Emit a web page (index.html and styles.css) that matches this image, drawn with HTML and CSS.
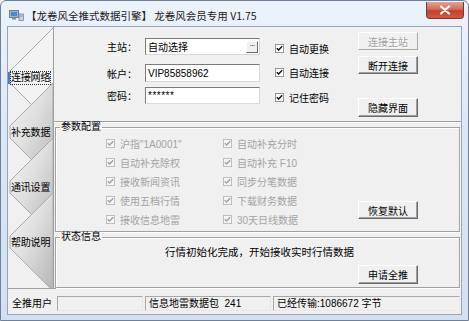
FILE: index.html
```html
<!DOCTYPE html>
<html lang="zh-CN">
<head>
<meta charset="utf-8">
<title>龙卷风全推式数据引擎</title>
<link rel="stylesheet" href="styles.css">
</head>
<body>
<div class="window">
  <div class="titlebar">
    <svg class="app-icon" width="15" height="11" viewBox="0 0 15 11">
      <rect x="0.5" y="0.5" width="9" height="7" fill="#9fb3c8" stroke="#6b7f95"/>
      <rect x="2" y="2" width="6" height="4" fill="#3c8de0"/>
      <rect x="3" y="8" width="4" height="1.5" fill="#7d8b99"/>
      <rect x="10" y="4" width="4.5" height="6.5" fill="#c9d3dc" stroke="#7c8894" stroke-width="0.8"/>
      <rect x="11" y="5.5" width="2.5" height="1" fill="#5d93cf"/>
    </svg>
    <span class="title">【龙卷风全推式数据引擎】 龙卷风会员专用 V1.75</span>
    <div class="close">
      <svg width="12" height="10" viewBox="0 0 12 10"><path d="M2 1.5L10 8.5M10 1.5L2 8.5" stroke="#fff" stroke-width="2.2" stroke-linecap="round"/></svg>
    </div>
  </div>
  <div class="client">
    <div class="body">
      <nav class="tabs">
        <svg class="tabs-bg" width="45" height="261" viewBox="0 0 45 261">
          <defs>
            <linearGradient id="tg" x1="0" y1="0" x2="1" y2="1">
              <stop offset="0" stop-color="#f6f6f6"/>
              <stop offset="0.45" stop-color="#e0e0e0"/>
              <stop offset="1" stop-color="#b5b5b5"/>
            </linearGradient>
          </defs>
          <path d="M45 1L2 44V56L45 99" fill="#f3f3f3" stroke="#a9a9a9"/>
          <polygon points="2,99 2,111 45,154 45,56" fill="url(#tg)" stroke="#a9a9a9"/>
          <polygon points="2,154 2,166 45,209 45,111" fill="url(#tg)" stroke="#a9a9a9"/>
          <polygon points="2,209 2,221 45,264 45,166" fill="url(#tg)" stroke="#a9a9a9"/>
        </svg>
        <div class="tab active"><span class="tab-label focus">连接网络</span></div>
        <div class="tab"><span class="tab-label">补充数据</span></div>
        <div class="tab"><span class="tab-label">通讯设置</span></div>
        <div class="tab"><span class="tab-label">帮助说明</span></div>
      </nav>
      <main class="main">
        <section class="top">
          <div class="form">
            <div class="frow r1"><span class="flabel">主站：</span><div class="field combo"><span>自动选择</span><span class="dots">···</span></div></div>
            <div class="frow r2"><span class="flabel">帐户：</span><div class="field tall">VIP85858962</div></div>
            <div class="frow"><span class="flabel">密码：</span><div class="field pwd">******</div></div>
          </div>
          <div class="checks">
            <div class="chk c1"><svg class="cb" viewBox="0 0 10 10"><rect x="0.5" y="0.5" width="9" height="9"/><path d="M2 4.6l2 2 4-4.2"/></svg><span>自动更换</span></div>
            <div class="chk c2"><svg class="cb" viewBox="0 0 10 10"><rect x="0.5" y="0.5" width="9" height="9"/><path d="M2 4.6l2 2 4-4.2"/></svg><span>自动连接</span></div>
            <div class="chk c3"><svg class="cb" viewBox="0 0 10 10"><rect x="0.5" y="0.5" width="9" height="9"/><path d="M2 4.6l2 2 4-4.2"/></svg><span>记住密码</span></div>
          </div>
          <div class="btns">
            <button class="btn b1" disabled>连接主站</button>
            <button class="btn b2">断开连接</button>
            <button class="btn b3">隐藏界面</button>
          </div>
        </section>
        <fieldset class="group params">
          <legend>参数配置</legend>
          <div class="pgrid">
            <div class="chk off"><svg class="cb" viewBox="0 0 10 10"><rect x="0.5" y="0.5" width="9" height="9"/><path d="M2 4.6l2 2 4-4.2"/></svg><span>沪指"1A0001"</span></div>
            <div class="chk off"><svg class="cb" viewBox="0 0 10 10"><rect x="0.5" y="0.5" width="9" height="9"/><path d="M2 4.6l2 2 4-4.2"/></svg><span>自动补充分时</span></div>
            <div class="chk off"><svg class="cb" viewBox="0 0 10 10"><rect x="0.5" y="0.5" width="9" height="9"/><path d="M2 4.6l2 2 4-4.2"/></svg><span>自动补充除权</span></div>
            <div class="chk off"><svg class="cb" viewBox="0 0 10 10"><rect x="0.5" y="0.5" width="9" height="9"/><path d="M2 4.6l2 2 4-4.2"/></svg><span>自动补充 F10</span></div>
            <div class="chk off"><svg class="cb" viewBox="0 0 10 10"><rect x="0.5" y="0.5" width="9" height="9"/><path d="M2 4.6l2 2 4-4.2"/></svg><span>接收新闻资讯</span></div>
            <div class="chk off"><svg class="cb" viewBox="0 0 10 10"><rect x="0.5" y="0.5" width="9" height="9"/><path d="M2 4.6l2 2 4-4.2"/></svg><span>同步分笔数据</span></div>
            <div class="chk off"><svg class="cb" viewBox="0 0 10 10"><rect x="0.5" y="0.5" width="9" height="9"/><path d="M2 4.6l2 2 4-4.2"/></svg><span>使用五档行情</span></div>
            <div class="chk off"><svg class="cb" viewBox="0 0 10 10"><rect x="0.5" y="0.5" width="9" height="9"/><path d="M2 4.6l2 2 4-4.2"/></svg><span>下载财务数据</span></div>
            <div class="chk off"><svg class="cb" viewBox="0 0 10 10"><rect x="0.5" y="0.5" width="9" height="9"/><path d="M2 4.6l2 2 4-4.2"/></svg><span>接收信息地雷</span></div>
            <div class="chk off"><svg class="cb" viewBox="0 0 10 10"><rect x="0.5" y="0.5" width="9" height="9"/><path d="M2 4.6l2 2 4-4.2"/></svg><span>30天日线数据</span></div>
            <button class="btn reset">恢复默认</button>
          </div>
        </fieldset>
        <fieldset class="group status">
          <legend>状态信息</legend>
          <p class="msg">行情初始化完成，开始接收实时行情数据</p>
          <div class="apply-row"><button class="btn apply">申请全推</button></div>
        </fieldset>
      </main>
    </div>
    <footer class="statusbar">
      <span class="sb-label">全推用户</span>
      <span class="panel p1"></span>
      <span class="panel p2">信息地雷数据包&nbsp; 241</span>
      <span class="panel p3">已经传输:1086672 字节</span>
    </footer>
  </div>
</div>
</body>
</html>
```
FILE: styles.css
```css
* { box-sizing: border-box; }
html, body { margin: 0; padding: 0; }
body {
  width: 469px;
  height: 321px;
  overflow: hidden;
  background: #fff;
  font-family: "Liberation Sans", "Noto Sans CJK SC", sans-serif;
  font-size: 10px;
  color: #000;
}
.window {
  width: 469px;
  height: 321px;
  display: flex;
  flex-direction: column;
  background: linear-gradient(180deg, #edf3fa 0%, #dde7f3 40%, #d3e0ef 100%);
  border: 1px solid #6f8198;
  border-radius: 6px 6px 0 0;
  padding: 0 7px 6px 7px;
}
.titlebar {
  height: 26px;
  display: flex;
  align-items: center;
  padding-top: 2px;
}
.app-icon { margin-left: 1px; margin-right: 2px; }
.title {
  font-family: "Noto Sans CJK SC", sans-serif;
  font-size: 10.5px;
  color: #1a1a1a;
  white-space: nowrap;
}
.close {
  margin-left: auto;
  margin-right: -3px;
  align-self: flex-start;
  margin-top: -1px;
  width: 38px;
  height: 17px;
  border: 1px solid #6e3a3a;
  border-top: none;
  border-radius: 0 0 4px 4px;
  background: linear-gradient(180deg, #e8a394 0%, #d66a58 45%, #c2402c 55%, #cf5a43 100%);
  display: flex;
  align-items: center;
  justify-content: center;
}
.client {
  flex: 1;
  display: flex;
  flex-direction: column;
  background: #f0f0f0;
  box-shadow: 0 0 0 1px #93a5bb;
}
.body {
  height: 262px;
  display: flex;
  border-bottom: 1px solid #a0a0a0;
}
.tabs {
  width: 46px;
  position: relative;
  border-right: 1px solid #a0a0a0;
  padding-top: 23px;
}
.tabs-bg { position: absolute; left: 0; top: 0; }
.tab {
  position: relative;
  height: 55px;
  display: flex;
  align-items: center;
  padding-left: 3px;
}
.tab.active { padding-left: 0; }
.tab.active::before {
  content: "";
  width: 2px;
  height: 12px;
  background: #3b7fd6;
  margin-right: 1px;
}
.tab-label {
  white-space: nowrap;
  line-height: 12px;
  letter-spacing: -0.2px;
}
.tab-label.focus { outline: 1px dotted #333; outline-offset: 0; }
.main {
  flex: 1;
  display: flex;
  flex-direction: column;
}
.top {
  height: 95px;
  border-bottom: 1px solid #a0a0a0;
  box-shadow: 0 1px 0 #fff;
  display: flex;
  padding-left: 53px;
}
.form { padding-top: 11px; width: 153px; }
.frow { display: flex; align-items: center; }
.frow.r1 { margin-bottom: 9px; }
.frow.r2 { margin-bottom: 5px; }
.flabel { width: 38px; white-space: nowrap; }
.field {
  width: 115px;
  height: 17px;
  background: #fff;
  border: 1px solid;
  border-color: #7a7a7a #d8d8d8 #d8d8d8 #7a7a7a;
  display: flex;
  align-items: center;
  padding-left: 2px;
  white-space: nowrap;
}
.field.tall { height: 18px; }
.combo { justify-content: space-between; padding-right: 1px; }
.dots {
  width: 12px;
  height: 12px;
  border: 1px solid;
  border-color: #fff #6a6a6a #6a6a6a #fff;
  background: #f0f0f0;
  font-size: 8px;
  line-height: 8px;
  text-align: center;
  letter-spacing: -1px;
}
.pwd { letter-spacing: 0.5px; font-size: 10px; }
.checks { width: 83px; margin-left: 15px; padding-top: 14px; }
.chk {
  display: flex;
  align-items: center;
  height: 14px;
  white-space: nowrap;
}
.checks .c1 { margin-bottom: 10px; }
.checks .c2 { margin-bottom: 11px; }
.cb { width: 9px; height: 9px; margin-right: 5px; flex: none; }
.cb rect { fill: #fff; stroke: #8c8c8c; }
.cb path { fill: none; stroke: #111; stroke-width: 1.6; }
.chk.off { color: #a3a3a3; }
.chk.off .cb rect { fill: #f6f6f6; stroke: #b9b9b9; }
.chk.off .cb path { stroke: #a0a0a0; }
.btns { display: flex; flex-direction: column; padding-top: 5px; }
.btn {
  width: 60px;
  height: 18px;
  padding: 0;
  font: inherit;
  color: #000;
  background: #f0f0f0;
  border: 1px solid;
  border-color: #fff #6a6a6a #6a6a6a #fff;
  box-shadow: inset -1px -1px 0 #a0a0a0;
}
.btn:disabled { color: #a0a0a0; text-shadow: 1px 1px 0 #fff; border-color: #fff #a8a8a8 #a8a8a8 #fff; box-shadow: none; }
.btns .b1 { margin-bottom: 6px; }
.btns .b2 { margin-bottom: 24px; }
.btns .b3 { height: 19px; }
.group {
  margin: 0 1px;
  border: 1px solid #a0a0a0;
  box-shadow: inset 1px 1px 0 #fff, 1px 1px 0 #fff;
  padding: 2px 0 0 4px;
  min-width: 0;
}
.group legend {
  padding: 0 1px;
  line-height: 10px;
  font-size: 10px;
}
.params { height: 110px; }
.pgrid {
  margin-left: 46px;
  display: grid;
  grid-template-columns: 117px 135px 60px;
  grid-auto-rows: 19px;
  align-items: center;
}
.pgrid .chk:nth-child(odd) { grid-column: 1; }
.pgrid .chk:nth-child(even) { grid-column: 2; }
.reset { grid-column: 3; grid-row: 4 / span 2; }
.status { flex: 1; padding-top: 0; }
.msg {
  margin: 3px 0 0 0;
  text-align: center;
  font-family: "Noto Sans CJK SC", sans-serif;
  font-size: 10.5px;
  line-height: 13px;
}
.apply-row { display: flex; justify-content: flex-end; margin-top: 7px; padding-right: 41px; }
.apply { height: 19px; }
.statusbar {
  flex: 1;
  display: flex;
  align-items: flex-start;
  padding-top: 7px;
  gap: 2px;
}
.sb-label { width: 47px; padding-left: 4px; line-height: 15px; white-space: nowrap; }
.panel {
  height: 15px;
  border: 1px solid;
  border-color: #a8a8a8 #e8e8e8 #e8e8e8 #a8a8a8;
  line-height: 13px;
  padding-left: 3px;
  white-space: nowrap;
}
.p1 { width: 86px; }
.p2 { width: 126px; }
.p3 { width: 187px; }
```
